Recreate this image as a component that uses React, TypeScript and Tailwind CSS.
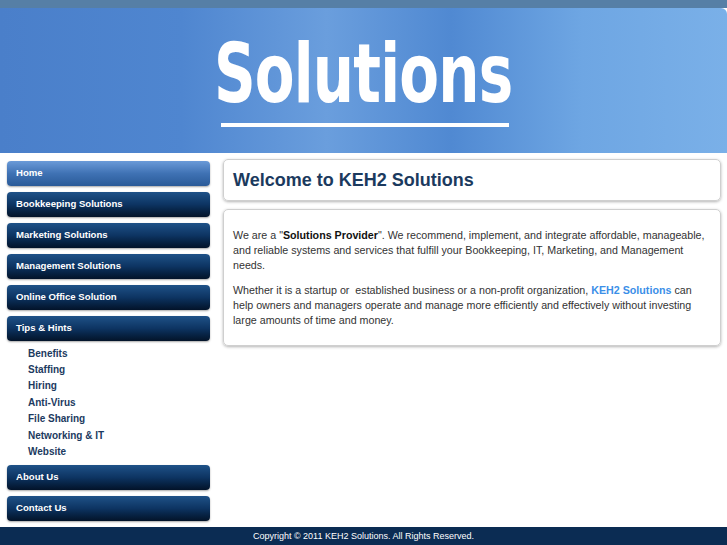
import React from "react";

const navTop = ["Bookkeeping Solutions", "Marketing Solutions", "Management Solutions", "Online Office Solution", "Tips & Hints"];
const subs = ["Benefits", "Staffing", "Hiring", "Anti-Virus", "File Sharing", "Networking & IT", "Website"];

function NavButton({ label, active }: { label: string; active?: boolean }) {
  return (
    <div
      className={
        "h-[25px] rounded-[4px] flex items-center pl-[9px] text-white font-bold text-[9.6px] shadow-[0_1px_2px_rgba(0,0,0,0.35)] " +
        (active
          ? "bg-gradient-to-b from-[#6a9ad8] via-[#3f72b4] to-[#2a5a98]"
          : "bg-gradient-to-b from-[#1f5288] via-[#0d3462] to-[#031329]")
      }
    >
      {label}
    </div>
  );
}

export default function App() {
  return (
    <div className="w-[727px] h-[545px] bg-white overflow-hidden flex flex-col" style={{ fontFamily: '"Liberation Sans", Arial, sans-serif' }}>
      <div className="h-[8px] bg-[#567fa6] shrink-0" />
      <div className="h-[145px] shrink-0 rounded-tr-[6px] bg-[linear-gradient(90deg,#4a7fca_0%,#4f86d0_25%,#6a9edd_45%,#5089d2_62%,#6ea6e3_80%,#7ab0e8_100%)] flex flex-col items-center">
        <div
          className="mt-[27px] h-[78px] text-white text-[82px] leading-[78px] font-bold tracking-[-1px] origin-center"
          style={{ fontFamily: '"Liberation Sans Narrow", "DejaVu Sans Condensed", "Liberation Sans", sans-serif', transform: "scaleX(0.785)" }}
        >
          Solutions
        </div>
        <div className="mt-[10px] w-[288px] h-[4px] bg-white ml-[2px]" />
      </div>
      <div className="flex flex-1 pt-[8px]">
        <div className="w-[203px] ml-[7px] flex flex-col">
          <NavButton label="Home" active />
          {navTop.map((l) => (
            <div key={l} className="mt-[6px]">
              <NavButton label={l} />
            </div>
          ))}
          <div className="flex flex-col pl-[21px] pt-[4px] pb-[2px]">
            {subs.map((s) => (
              <div key={s} className="h-[16.4px] flex items-center text-[10px] font-bold text-[#1c3a60]">
                {s}
              </div>
            ))}
          </div>
          <div className="mt-[3px]">
            <NavButton label="About Us" />
          </div>
          <div className="mt-[6px]">
            <NavButton label="Contact Us" />
          </div>
        </div>
        <div className="ml-[13px] -mt-[2px] w-[498px] flex flex-col">
          <div className="h-[42px] rounded-[5px] border border-[#cfcfcf] shadow-[0_1px_3px_rgba(0,0,0,0.3)] flex items-center pl-[9px]">
            <span className="text-[18px] font-bold text-[#1b3a5e]">Welcome to KEH2 Solutions</span>
          </div>
          <div className="mt-[8px] h-[137px] rounded-[5px] border border-[#cfcfcf] shadow-[0_1px_3px_rgba(0,0,0,0.3)] pl-[9px] pt-[18px] text-[10.7px] leading-[15px] text-[#333] whitespace-nowrap">
            <p>
              We are a "<b className="text-[#111]">Solutions Provider</b>". We recommend, implement, and integrate affordable, manageable,
              <br />
              and reliable systems and services that fulfill your Bookkeeping, IT, Marketing, and Management
              <br />
              needs.
            </p>
            <p className="mt-[10px]">
              Whether it is a startup or&nbsp; established business or a non-profit organization, <b className="text-[#3b8fe8]">KEH2 Solutions</b> can
              <br />
              help owners and managers operate and manage more efficiently and effectively without investing
              <br />
              large amounts of time and money.
            </p>
          </div>
        </div>
      </div>
      <div className="h-[18px] bg-[#0b2c53] shrink-0 flex items-center justify-center text-white text-[9px] pt-[2px]">
        Copyright © 2011 KEH2 Solutions. All Rights Reserved.
      </div>
    </div>
  );
}
